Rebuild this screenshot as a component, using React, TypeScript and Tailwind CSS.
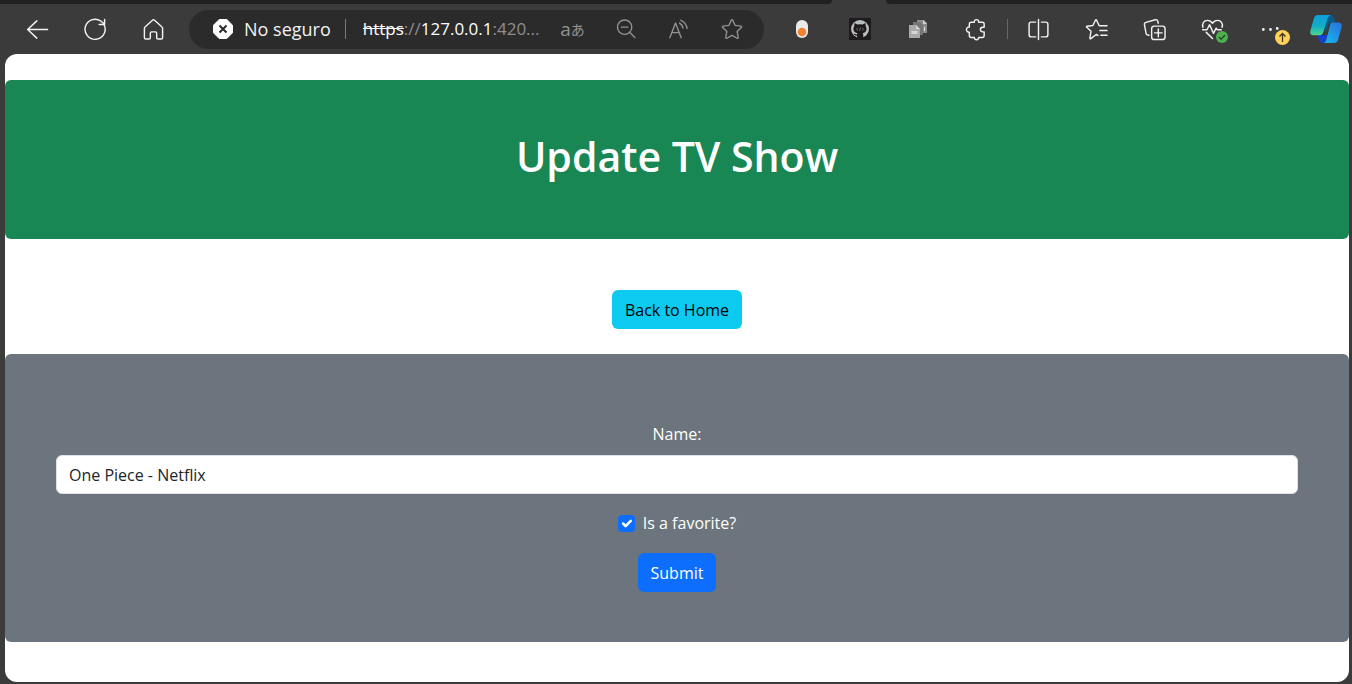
import { useState, type ReactNode } from "react";

function Icon({ children, size = 23 }: { children: ReactNode; size?: number }) {
  return (
    <svg
      width={size}
      height={size}
      viewBox="0 0 24 24"
      fill="none"
      stroke="currentColor"
      strokeWidth="1.5"
      strokeLinecap="round"
      strokeLinejoin="round"
      aria-hidden="true"
    >
      {children}
    </svg>
  );
}

function ToolButton({ label, children }: { label: string; children: ReactNode }) {
  return (
    <button type="button" aria-label={label} className="flex h-10 w-[58px] shrink-0 items-center justify-center">
      {children}
    </button>
  );
}

function PillButton({ label, children }: { label: string; children: ReactNode }) {
  return (
    <button type="button" aria-label={label} className="flex h-9 w-[53px] shrink-0 items-center justify-center text-[#929292]">
      {children}
    </button>
  );
}

function AddressBar() {
  return (
    <div className="mr-[9px] ml-[7px] flex h-[39px] min-w-0 flex-1 items-center rounded-full bg-[#2b2b2b] pr-1.5 pl-6">
      <button type="button" className="flex shrink-0 items-center gap-[11px]">
        <svg width="20" height="20" viewBox="0 0 20 20" aria-hidden="true">
          <path d="M6.200 0.500h7.600L19.500 6.200v7.600L13.800 19.500H6.200L0.500 13.800V6.200z" fill="#fff" stroke="#fff" strokeLinejoin="round" />
          <path d="M6.500 6.500l7 7M13.500 6.500l-7 7" stroke="#2b2b2b" strokeWidth="2" />
        </svg>
        <span className="text-lg">No seguro</span>
      </button>
      <div className="ml-[14px] h-5 w-px shrink-0 bg-[#7a7a7a]" />
      <div className="ml-[17px] min-w-0 flex-1 truncate text-[17px] text-[#8f8f8f]">
        <span className="text-white line-through">https</span>://<span className="text-white">127.0.0.1</span>:420...
      </div>
      <PillButton label="Translate">
        <span className="flex items-center">
          <span className="text-[19px] leading-5">a</span>
          <span className="font-['Noto_Sans_CJK_JP',sans-serif] text-[14px] leading-5">あ</span>
        </span>
      </PillButton>
      <PillButton label="Zoom">
        <Icon size={22}>
          <circle cx="10.500" cy="10" r="7.800" />
          <path d="M16.200 15.700l5.500 5.500M7 10h7" />
        </Icon>
      </PillButton>
      <PillButton label="Read aloud">
        <Icon size={22}>
          <path d="M2 21.500L8.200 5.500l6.200 16M4.200 16h8M12.500 5.500c2.200 1.200 3.500 3 3.800 5.500M14 2.500c4 1.800 6.300 4.800 6.800 9" />
        </Icon>
      </PillButton>
      <PillButton label="Add to favorites">
        <Icon size={22}>
          <path d="M11.200 2.300c.3-.7 1.300-.7 1.600 0l2.500 5.700 6.400.8c.8.100 1.100 1 .5 1.600l-4.600 4.300 1.200 6.400c.1.800-.7 1.300-1.300 1L12 19l-5.500 3.100c-.6.300-1.400-.2-1.300-1l1.200-6.400-4.600-4.300c-.6-.6-.3-1.500.5-1.600L8.700 8z" />
        </Icon>
      </PillButton>
    </div>
  );
}

function CopilotLogo() {
  return (
    <svg width="34" height="30" viewBox="0 0 34 30" aria-hidden="true">
      <defs>
        <linearGradient id="teal" x1="0" y1="0" x2="0" y2="1">
          <stop offset="0" stopColor="#0d9fdc" />
          <stop offset=".55" stopColor="#11aec4" />
          <stop offset="1" stopColor="#4fd78c" />
        </linearGradient>
        <linearGradient id="blue" x1="0" y1="1" x2="1" y2="0">
          <stop offset="0" stopColor="#18b9ef" />
          <stop offset="1" stopColor="#2870da" />
        </linearGradient>
      </defs>
      <path d="M16 1h5.500c2 0 3 1 3.500 3l1.200 4H23c-2 0-3 1.200-3.600 3l-3 9z" fill="#075a8c" />
      <path d="M8 21h11l-3 8h-2.500c-2 0-3-1-3.500-3z" fill="#1740cf" />
      <path d="M9 1h13c-2 .4-3 2-3.600 4l-4 13c-.8 2.300-2 3.300-4 3.300H4.500c-3 0-3.800-2.300-3-5L5 4c.7-2 2-3 4-3z" fill="url(#teal)" />
      <path d="M23 8.500h6.500c3 0 3.700 2.300 3 5L29 26c-.6 2-2 3-4 3H14.500c2-.6 2.500-2 3-4l3.500-13.500c.5-2 1-3 2-3z" fill="url(#blue)" />
    </svg>
  );
}

function BrowserToolbar() {
  return (
    <header>
      <div className="flex h-1">
        <div className="flex-[832] rounded-br-md bg-[#202020]" />
        <div className="w-[54px]" />
        <div className="flex-[466] rounded-bl-md bg-[#202020]" />
      </div>
      <nav aria-label="Browser" className="flex h-[50px] items-center pl-2 text-[#f2f2f2]">
        <ToolButton label="Back">
          <Icon>
            <path d="M22.500 12H1.700M11.300 3L1.700 12l9.600 9" />
          </Icon>
        </ToolButton>
        <ToolButton label="Refresh">
          <Icon>
            <path d="M21.300 7.800A10.500 10.500 0 1 1 17.500 3.100L21.500 6.500M21.500 1.500v5.200h-5.700" />
          </Icon>
        </ToolButton>
        <ToolButton label="Home">
          <Icon>
            <path d="M2.500 11c0-.8.300-1.400.9-1.900l7.500-6.700c.6-.6 1.500-.6 2.200 0l7.500 6.700c.6.500.9 1.100.9 1.900v9.500c0 .9-.6 1.500-1.500 1.500h-3.400c-.8 0-1.300-.5-1.300-1.300v-5c0-.8-.5-1.200-1.300-1.200h-4c-.8 0-1.300.4-1.300 1.200v5c0 .8-.5 1.300-1.300 1.300H4c-.9 0-1.500-.6-1.500-1.500z" />
          </Icon>
        </ToolButton>
        <AddressBar />
        <ToolButton label="Toggle extension">
          <svg width="14" height="20" viewBox="0 0 14 20" aria-hidden="true">
            <rect x="1" y="1" width="12" height="18" rx="6" fill="#e9ebea" />
            <circle cx="7" cy="13" r="4.300" fill="#f5822f" />
          </svg>
        </ToolButton>
        <ToolButton label="GitHub extension">
          <svg width="22" height="22" viewBox="0 0 22 22" aria-hidden="true">
            <rect width="22" height="22" fill="#1f1b1d" />
            <circle cx="11" cy="11" r="9" fill="#b9bec1" />
            <path d="M5.500 5l3 1.500q2.500-.6 5 0l3-1.500.3 3.300c1.500 3 .7 6.200-3 6.900.6 1 .5 3 .5 5H8.200v-2.500c-2 .3-3-1-3.500-2 1.500 0 2 1 3.500.6l.3-1.100c-4-.7-5-4-3.300-6.900z" fill="#1f1b1d" />
            <path d="M8.800 10l-1.300 1.200 1.300 1.200M13.200 10l1.300 1.200-1.300 1.200M11.600 9.500l-1.200 3.500" stroke="#8d9194" strokeWidth=".7" fill="none" />
          </svg>
        </ToolButton>
        <ToolButton label="Documents extension">
          <svg width="20" height="20" viewBox="0 0 20 20" aria-hidden="true">
            <path d="M9 1h7l3 3v10H9z" fill="#8d8d8d" />
            <path d="M15 1l4 4h-4z" fill="#d0d0d0" />
            <path d="M5 3h7l3 3v10H5z" fill="#757575" />
            <path d="M1 6h7l4 4v9H1z" fill="#aaa" />
            <path d="M8 6l4 4H8zM3.500 12h6v3h-6z" fill="#d6d6d6" />
            <path d="M16 8h1v4h-1z" fill="#ddd" />
          </svg>
        </ToolButton>
        <ToolButton label="Extensions">
          <Icon>
            <path d="M6.500 4.500h3.200C9.500 2.700 10.700 1.700 12 1.700s2.500 1 2.300 2.800h3.700c1.300 0 2 .7 2 2v3.200h-1.500a2.400 2.400 0 0 0 0 4.800H20v3.800c0 1.300-.7 2-2 2h-3.700c.2 1.300-.9 2.300-2.300 2.300s-2.500-1-2.300-2.300H6.500c-1.300 0-2-.7-2-2v-3.500C2.700 15 1.500 13.700 1.500 12.100S2.700 9.300 4.500 9.500v-3c0-1.300.7-2 2-2z" />
          </Icon>
        </ToolButton>
        <div className="flex w-1 shrink-0 justify-center">
          <div className="h-5 w-px bg-[#666]" />
        </div>
        <ToolButton label="Split screen">
          <Icon>
            <path d="M9 4.300H4.500c-1.400 0-2.300.9-2.300 2.300v10.800c0 1.400.9 2.300 2.300 2.300H9M15 4.300h4.500c1.400 0 2.300.9 2.300 2.300v10.800c0 1.400-.9 2.300-2.300 2.300H15M12 1.500v21" />
          </Icon>
        </ToolButton>
        <ToolButton label="Favorites">
          <Icon>
            <path d="M13.500 18.200l-1.800-1-5.600 4.300c-.7.300-1.100 0-1-.7l1.200-6.900-4.500-4.200c-.5-.5-.3-1 .4-1.100l6-.8 2.700-5.500c.4-.6.900-.6 1.200 0l2.700 5.800h8.200M15.500 13h7.500M16.500 18h6.500" />
          </Icon>
        </ToolButton>
        <ToolButton label="Collections">
          <Icon>
            <rect x="9" y="8.500" width="14" height="14" rx="2.800" />
            <path d="M16 11.500v8M12 15.500h8M6.200 18l-1.300-.3c-1-.2-1.500-.8-1.700-1.700L1.500 6.900c-.2-1.200.4-2 1.600-2.300l9.800-2.800c1.300-.3 2.200.2 2.500 1.400l.5 2.300" />
          </Icon>
        </ToolButton>
        <ToolButton label="Browser essentials">
          <span className="relative block">
            <Icon>
              <path d="M2 9.700C.8 5.500 3.200 2.500 6.800 2.500c2.300 0 4 1.200 5.200 3 1.200-1.800 2.900-3 5.200-3 3.600 0 6 3 4.800 7.200M1.700 12.300h4.500L9 7l4 9 2.800-5.400 1.300 1.700h4M5.500 15l6.500 6.500" />
            </Icon>
            <svg width="12" height="12" viewBox="0 0 12 12" className="absolute -right-1 -bottom-0.5" aria-hidden="true">
              <circle cx="6" cy="6" r="6" fill="#4caf50" />
              <path d="M3 6.200l2 2 4-4" stroke="#1e3520" strokeWidth="1.200" fill="none" />
            </svg>
          </span>
        </ToolButton>
        <ToolButton label="Settings and more">
          <span className="relative block">
            <Icon>
              <path d="M4.500 12h.01M12 12h.01M19 11h.01" strokeWidth="3" />
            </Icon>
            <svg width="15" height="15" viewBox="0 0 15 15" className="absolute -right-2 -bottom-1" aria-hidden="true">
              <circle cx="7.500" cy="7.500" r="7.500" fill="#ffd255" />
              <path d="M7.500 12V3.500M4.500 6.500l3-3 3 3" stroke="#3b3424" strokeWidth="1.300" fill="none" />
            </svg>
          </span>
        </ToolButton>
        <button type="button" aria-label="Copilot" className="flex h-10 w-[53px] shrink-0 items-center justify-center">
          <CopilotLogo />
        </button>
      </nav>
    </header>
  );
}

export default function App() {
  const [name, setName] = useState("One Piece - Netflix");
  const [favorite, setFavorite] = useState(true);

  return (
    <div className="flex min-h-screen flex-col bg-[#3b3b3b] font-['Open_Sans','Noto_Sans',sans-serif]">
      <BrowserToolbar />
      <main className="mr-[3px] mb-0.5 ml-[5px] flex-1 overflow-hidden rounded-xl bg-white pt-[26px] pb-10 text-base text-white">
        <div className="rounded-md bg-[#198754] px-12 pt-12 pb-[54px] text-center">
          <h1 className="text-[41px] leading-[57px] font-semibold">Update TV Show</h1>
        </div>
        <div className="flex justify-center pt-[51px] pb-[25px]">
          <a href="#home" className="rounded-md bg-[#0dcaf0] px-[13px] pt-2 pb-1.5 leading-[25px] text-black">
            Back to Home
          </a>
        </div>
        <form
          className="flex flex-col items-center rounded-md bg-[#6c757d] px-[51px] pt-[68px] pb-[50px]"
          onSubmit={(event) => event.preventDefault()}
        >
          <label htmlFor="name" className="mb-2 leading-[25px]">
            Name:
          </label>
          <input
            id="name"
            type="text"
            value={name}
            onChange={(event) => setName(event.target.value)}
            className="h-[39px] w-full rounded-md border border-[#dee2e6] bg-white px-3 text-[#212529]"
          />
          <div className="mt-[17px] flex items-center gap-2">
            <span className="relative flex">
              <input
                id="favorite"
                type="checkbox"
                checked={favorite}
                onChange={(event) => setFavorite(event.target.checked)}
                className="peer size-[17px] appearance-none rounded bg-white checked:bg-[#0d6efd]"
              />
              <svg
                viewBox="0 0 20 20"
                className="pointer-events-none absolute inset-0 hidden size-[17px] peer-checked:block"
                fill="none"
                stroke="#fff"
                strokeWidth="3"
                strokeLinecap="round"
                strokeLinejoin="round"
                aria-hidden="true"
              >
                <path d="M6 10l3 3 6-6" />
              </svg>
            </span>
            <label htmlFor="favorite" className="leading-[25px]">
              Is a favorite?
            </label>
          </div>
          <button type="submit" className="mt-[17px] rounded-md bg-[#0d6efd] px-[13px] pt-2 pb-1.5 leading-[25px]">
            Submit
          </button>
        </form>
      </main>
    </div>
  );
}
